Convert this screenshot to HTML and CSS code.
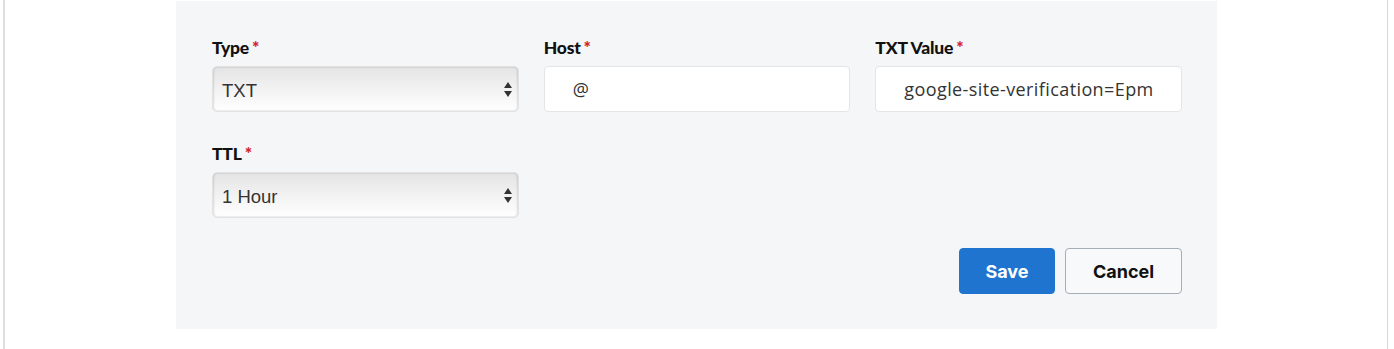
FILE: index.html
```
<!DOCTYPE html>
<html lang="en">
<head>
    <meta charset="UTF-8">
    <meta name="viewport" content="width=device-width, initial-scale=1.0">
    <title>Edit record</title>
    <link rel="stylesheet" href="styles.css">
</head>
<body>
    <div class="frame">
        <form class="panel">
            <div class="fields">
                <div class="field">
                    <label class="label">Type<span class="req">*</span></label>
                    <div class="select-wrap">
                        <select class="select">
                            <option>TXT</option>
                        </select>
                        <span class="arrows"></span>
                    </div>
                </div>
                <div class="field">
                    <label class="label">Host<span class="req">*</span></label>
                    <input class="input" type="text" value="@">
                </div>
                <div class="field">
                    <label class="label">TXT Value<span class="req">*</span></label>
                    <input class="input" type="text" value="google-site-verification=Epmw3xK">
                </div>
                <div class="field">
                    <label class="label">TTL<span class="req">*</span></label>
                    <div class="select-wrap">
                        <select class="select">
                            <option>1 Hour</option>
                        </select>
                        <span class="arrows"></span>
                    </div>
                </div>
            </div>
            <div class="actions">
                <button type="button" class="btn btn-save">Save</button>
                <button type="button" class="btn btn-cancel">Cancel</button>
            </div>
        </form>
    </div>
</body>
</html>
```
FILE: styles.css
```
html, body {
    margin: 0;
    background: #fff;
}
.frame {
    margin-left: 3px;
    width: 1385px;
    height: 349px;
    border-left: 2px solid #dedede;
    border-right: 1px solid #d6d6d6;
    padding-top: 1px;
    box-sizing: border-box;
}
.panel {
    margin-left: 171px;
    width: 1041px;
    height: 328px;
    box-sizing: border-box;
    padding: 37px 35px 36px 36px;
    background: #f5f6f8;
    display: flex;
    flex-direction: column;
}
.fields {
    display: grid;
    grid-template-columns: repeat(3, 1fr);
    column-gap: 25px;
    row-gap: 32px;
}
.field {
    display: flex;
    flex-direction: column;
    gap: 8px;
}
.label {
    font-family: Lato, "Liberation Sans", sans-serif;
    font-weight: 900;
    font-size: 17.5px;
    line-height: 20px;
    color: #111;
    letter-spacing: -0.2px;
}
.req {
    color: #d2232a;
    margin-left: 3px;
}
.select-wrap {
    position: relative;
}
.select {
    -webkit-appearance: none;
    appearance: none;
    width: 100%;
    height: 46px;
    border: 1px solid #e2e2e2;
    border-radius: 5px;
    padding: 2px 9px 0;
    background: linear-gradient(#e4e4e4, #f2f2f2 50%, #ffffff);
    box-shadow: inset 1px 0 2px rgba(0,0,0,0.12), inset -1px 0 2px rgba(0,0,0,0.12);
    font-family: "Liberation Sans", Arial, sans-serif;
    font-size: 18.5px;
    color: #333;
}
.arrows {
    position: absolute;
    right: 7px;
    top: 16px;
    width: 8px;
    height: 15px;
}
.arrows::before, .arrows::after {
    content: "";
    position: absolute;
    left: 0;
    border-left: 4px solid transparent;
    border-right: 4px solid transparent;
}
.arrows::before {
    top: 0;
    border-bottom: 6px solid #333;
}
.arrows::after {
    bottom: 0;
    border-top: 6px solid #333;
}
.input {
    height: 46px;
    box-sizing: border-box;
    border: 1px solid #e4e5e7;
    border-radius: 4px;
    background: #fff;
    padding: 0 28px;
    font-family: "Open Sans", "Noto Sans", sans-serif;
    font-size: 18px;
    letter-spacing: 0.4px;
    color: #333;
    width: 100%;
    outline: none;
}
.actions {
    margin-top: 30px;
    display: flex;
    justify-content: flex-end;
    gap: 10px;
}
.btn {
    height: 46px;
    border-radius: 4px;
    font-family: Inter, "Liberation Sans", sans-serif;
    font-weight: 700;
    font-size: 18px;
    cursor: pointer;
}
.btn-save {
    width: 96px;
    background: #1f74d0;
    border: 1px solid #1f74d0;
    color: #fff;
}
.btn-cancel {
    width: 117px;
    background: #f8f9fa;
    border: 1px solid #a4aeb8;
    color: #111;
}
```
